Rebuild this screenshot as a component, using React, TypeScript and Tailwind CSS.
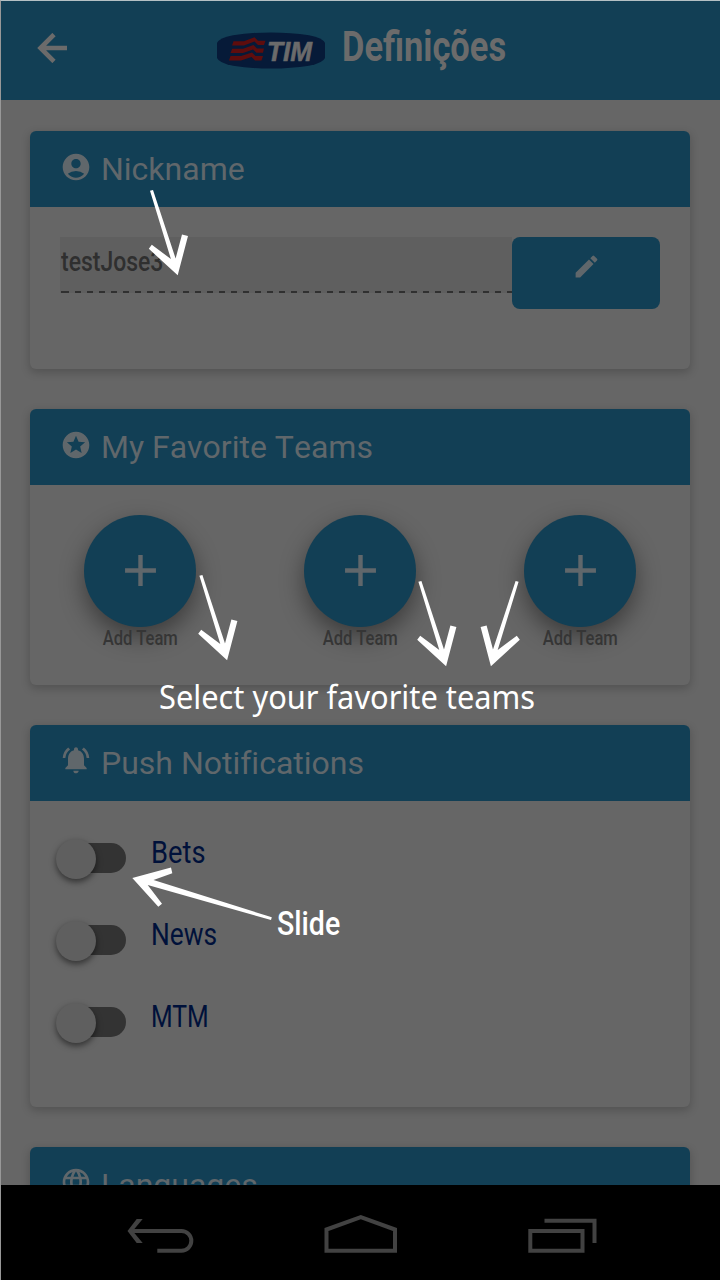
import React from "react";
import {
  MdAccountCircle,
  MdAdd,
  MdEdit,
  MdLanguage,
  MdNotificationsActive,
  MdStars,
} from "react-icons/md";

type CardProps = {
  icon: React.ReactNode;
  title: string;
  className: string;
  children?: React.ReactNode;
};

function Card({ icon, title, className, children }: CardProps) {
  return (
    <section
      className={`flex w-[660px] shrink-0 flex-col overflow-hidden rounded-[6px] bg-[#666666] shadow-[0_3px_8px_1px_rgba(0,0,0,0.18)] ${className}`}
    >
      <header className="flex h-[76px] shrink-0 items-start bg-[#123f55] pl-[30px] text-[#60676b]">
        <span className="mt-[20px] flex size-8 shrink-0">{icon}</span>
        <h2 className="mt-[18px] ml-[9px] whitespace-nowrap text-[32px] leading-10 font-normal [font-kerning:none] [font-variant-ligatures:none]">
          {title}
        </h2>
      </header>
      {children}
    </section>
  );
}

function Team() {
  return (
    <div className="flex w-[220px] flex-col items-center pt-[30px]">
      <button className="flex size-[112px] items-center justify-center rounded-full bg-[#123f55] text-[#60676b] shadow-[0_10px_24px_rgba(0,0,0,0.42)]">
        <MdAdd className="mb-[2px] size-[53px]" />
      </button>
      <span className="-mt-px inline-block scale-x-[.83] whitespace-nowrap text-[20px] leading-6 font-medium text-[#353535]">
        Add Team
      </span>
    </div>
  );
}

function Toggle({ label, labelClass }: { label: string; labelClass: string }) {
  return (
    <div className="flex h-[82px] items-start pl-[26px]">
      <span className="mt-1 flex h-[30px] w-[70px] items-center pl-3">
        <span className="flex h-[30px] w-[58px] items-center rounded-full bg-[#333333]">
          <span className="-ml-[12px] mt-[2px] size-10 shrink-0 rounded-full bg-[#5f5f5f] shadow-[0_3px_6px_rgba(0,0,0,0.5)]" />
        </span>
      </span>
      <span
        className={`-mt-1 ml-[25px] inline-block origin-left whitespace-nowrap text-[31px] leading-9 text-[#00113a] ${labelClass}`}
      >
        {label}
      </span>
    </div>
  );
}

function TimLogo() {
  return (
    <svg viewBox="0 0 108 37" className="h-[37px] w-[108px]">
      <path d="M0 11Q2 6 16 3.2Q34 .4 54 .4T92 3.2Q106 6 108 11V26Q106 31 92 33.8Q74 36.6 54 36.6T16 33.8Q2 31 0 26Z" fill="#061a38" />
      <g fill="#5e0d0d">
        <path d="M16.500 9.200H27L37.500 5.200L41 8.800H48.500L47 13H41L37.500 9.600L27 13.400H15Z" />
        <path d="M15.200 16.800H26L36.500 13L40 16.600H47L46 20.800H39.500L36 17.500L26 21H13.500Z" />
        <path d="M13.500 24.100H24L35 20.600L38.500 24.100H46L44.500 28.400H38L34.500 25L24 28.400H12Z" />
      </g>
      <text x="50" y="28.500" textLength="45" lengthAdjust="spacingAndGlyphs" fill="#6b6b6b" stroke="#6b6b6b" strokeWidth=".6" fontFamily="Liberation Sans, sans-serif" fontSize="28" fontWeight="700" fontStyle="italic">
        TIM
      </text>
    </svg>
  );
}

const downArrow =
  "150,190.8 153,190 175.6,258.5 182,234.5 188,236 177.7,275.3 148.8,248.8 151.8,244.8 170.9,259";

export default function App() {
  return (
    <div className="relative flex h-[1280px] w-[720px] flex-col overflow-hidden border-t border-l border-t-[#b4c0c4] border-l-[#989898] bg-[#666666] font-['Roboto',sans-serif]">
      <header className="flex h-[99px] shrink-0 items-start bg-[#123f55]">
        <svg viewBox="0 0 30 30" className="mt-[32px] ml-[36px] size-[30px]" fill="none" stroke="#6b6b6b" strokeWidth="4.600">
          <path d="M30 15H4M17 1.500L3.500 15L17 28.500" />
        </svg>
        <div className="mt-[31px] ml-[150px]">
          <TimLogo />
        </div>
        <h1 className="mt-[21px] ml-[17px] inline-block origin-left scale-x-[.82] whitespace-nowrap text-[42px] leading-[50px] font-bold text-[#6b6b6b]">
          Definições
        </h1>
      </header>

      <main className="flex h-[1085px] shrink-0 flex-col items-start gap-10 overflow-hidden pt-[31px] pl-[29px]">
        <Card title="Nickname" className="h-[238px]" icon={<MdAccountCircle className="size-8" />}>
          <div className="flex px-[30px] pt-[30px]">
            <div className="flex h-[56px] w-[452px] flex-col bg-[#5f5f5f]">
              <span className="mt-[7px] ml-px inline-block w-[200px] origin-left scale-x-[.82] text-[28px] leading-9 font-medium text-[#2f2f2f]">
                testJose3
              </span>
              <svg className="mt-[11px] h-[2px] w-full shrink-0" viewBox="0 0 452 2">
                <path d="M1 1H3" stroke="#303030" strokeWidth="2" />
                <path d="M3 1H452" stroke="#303030" strokeWidth="2" strokeDasharray="6 6" />
              </svg>
            </div>
            <button className="flex h-[72px] w-[148px] justify-center rounded-lg bg-[#123f55] pt-[15px] text-[#60676b]">
              <MdEdit className="size-[29px]" />
            </button>
          </div>
        </Card>

        <Card title="My Favorite Teams" className="h-[276px]" icon={<MdStars className="size-8" />}>
          <div className="flex">
            <Team />
            <Team />
            <Team />
          </div>
        </Card>

        <Card title="Push Notifications" className="h-[382px]" icon={<MdNotificationsActive className="-mt-px size-8" />}>
          <div className="flex flex-col pt-[38px]">
            <Toggle label="Bets" labelClass="scale-x-[.88]" />
            <Toggle label="News" labelClass="scale-x-[.85]" />
            <Toggle label="MTM" labelClass="scale-x-[.80]" />
          </div>
        </Card>

        <Card title="Languages" className="h-[238px]" icon={<MdLanguage className="-mt-px size-8" />} />
      </main>

      <nav className="h-[95px] w-full shrink-0 bg-black">
        <svg viewBox="1 1185 719 95" className="h-[95px] w-[719px]" fill="none" stroke="#424242" strokeWidth="4">
          <path d="M131 1231H181.500A9.850 9.850 0 0 1 181.500 1250.700H157.300" />
          <path d="M136.700 1219H142.700L132.700 1231L142.700 1243H136.700L127.500 1231Z" fill="#424242" stroke="none" />
          <path d="M326.500 1250.700V1229.500L360.800 1217.200L395 1229.500V1250.700Z" />
          <path d="M530.300 1231H582.500V1250.700H530.300Z M544.500 1220.700H594.500V1243" />
        </svg>
      </nav>

      <svg viewBox="0 0 720 1280" className="pointer-events-none absolute -top-px -left-px h-[1280px] w-[720px]" fill="#fff">
        <polygon points={downArrow} />
        <polygon points={downArrow} transform="translate(49.4 385)" />
        <polygon points={downArrow} transform="translate(268.4 391)" />
        <polygon points={downArrow} transform="translate(668.6 391) scale(-1 1)" />
        <polygon points="132.3,878 171,867.4 172.3,873.2 153.5,880 271.8,917.3 271,920 147.7,885 162,903.7 158.3,906.7" />
      </svg>
      <p className="absolute top-[674px] left-[158px] origin-left scale-x-[.962] whitespace-nowrap font-['Noto_Sans',sans-serif] text-[32px] leading-[44px] text-white">
        Select your favorite teams
      </p>
      <p className="absolute top-[902px] left-[275.500px] origin-left scale-x-[.84] whitespace-nowrap text-[34px] leading-10 font-medium text-white">
        Slide
      </p>
    </div>
  );
}
